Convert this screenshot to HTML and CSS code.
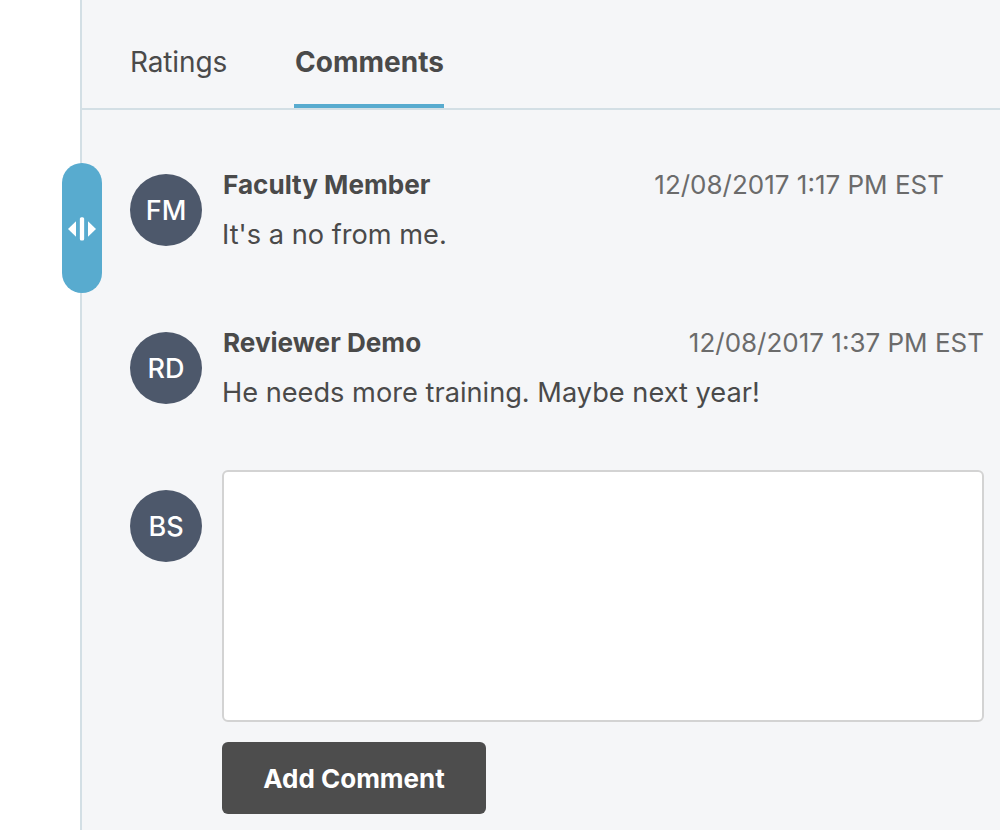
FILE: index.html
```html
<!DOCTYPE html>
<html lang="en">
<head>
<meta charset="utf-8">
<title>Comments</title>
<link rel="stylesheet" href="styles.css">
</head>
<body>
<div class="layout">
  <aside class="rail"></aside>
  <main class="panel">
    <div class="handle">
      <svg width="28" height="24" viewBox="0 0 28 24" class="handle-icon">
        <path d="M0 12 L8 4.200 V19.800 Z" fill="#fff"/>
        <rect x="11.850" y="0.200" width="4.300" height="23.300" rx="1.500" fill="#fff"/>
        <path d="M28 12 L20 4.200 V19.800 Z" fill="#fff"/>
      </svg>
    </div>
    <nav class="tabs">
      <a class="tab tab-plain">Ratings</a>
      <a class="tab tab-active">Comments</a>
    </nav>
    <section class="comments">
      <article class="comment comment-first">
        <div class="avatar">FM</div>
        <div class="comment-body">
          <div class="comment-head">
            <span class="author">Faculty Member</span>
            <span class="time">12/08/2017 1:17 PM EST</span>
          </div>
          <p class="text">It's a no from me.</p>
        </div>
      </article>
      <article class="comment">
        <div class="avatar">RD</div>
        <div class="comment-body">
          <div class="comment-head">
            <span class="author">Reviewer Demo</span>
            <span class="time">12/08/2017 1:37 PM EST</span>
          </div>
          <p class="text">He needs more training. Maybe next year!</p>
        </div>
      </article>
      <form class="comment new-comment">
        <div class="avatar">BS</div>
        <div class="comment-body new-comment-body">
          <textarea class="input"></textarea>
          <button type="button" class="submit">Add Comment</button>
        </div>
      </form>
    </section>
  </main>
</div>
</body>
</html>
```

FILE: styles.css
```css
* { box-sizing: border-box; }
html, body { margin: 0; height: 100%; overflow: hidden; }
body { font-family: Inter, "Liberation Sans", sans-serif; color: #4a4a4a; background: #fff; }
.layout { display: flex; height: 830px; }
.rail { width: 80px; flex: none; }
.panel { position: relative; flex: 1; background: #f5f6f8; border-left: 2px solid #d3dfe5; }
.handle {
  position: absolute; left: -20px; top: 163px;
  width: 40px; height: 130px; border-radius: 20px;
  background: #58abcf;
  display: flex; align-items: center; justify-content: center;
}
.handle-icon { width: 28px; height: 24px; margin-top: 1px; }
.tabs { display: flex; gap: 67px; height: 110px; padding-left: 48px; border-bottom: 2px solid #d3dfe5; }
.tab { height: 108px; font-size: 28px; line-height: 32px; padding-top: 46px; border-bottom: 4px solid transparent; }
.tab-plain { letter-spacing: -0.140px; }
.tab-active { font-weight: 700; padding-left: 1px; border-bottom-color: #58abcf; }
.comments { padding: 64px 16px 0 48px; }
.comment { display: flex; gap: 20px; height: 158px; }
.comment-first { padding-right: 40px; }
.avatar {
  flex: none; width: 72px; height: 72px; border-radius: 50%;
  background: #4d586b; color: #fff;
  display: flex; align-items: center; justify-content: center;
  font-size: 27px; font-weight: 500;
}
.comment-body { flex: 1; min-width: 0; }
.comment-head { display: flex; justify-content: space-between; height: 32px; align-items: center; margin-top: -6px; }
.author { font-size: 26.100px; font-weight: 700; padding-left: 1px; }
.time { font-size: 26px; color: #6b6b6b; }
.text { margin: 19px 0 0; font-size: 27.200px; line-height: 32px; }
.new-comment { height: auto; }
.new-comment-body { margin-top: -20px; }
.input {
  display: block; width: 100%; height: 252px; margin: 0;
  background: #fff; border: 2px solid #d3d3d3; border-radius: 6px; resize: none;
}
.submit {
  display: block; margin-top: 20px; width: 264px; height: 72px; padding: 0;
  background: #4d4d4d; color: #fff; border: 0; border-radius: 6px;
  font-family: inherit; font-size: 26px; font-weight: 700;
}
```
